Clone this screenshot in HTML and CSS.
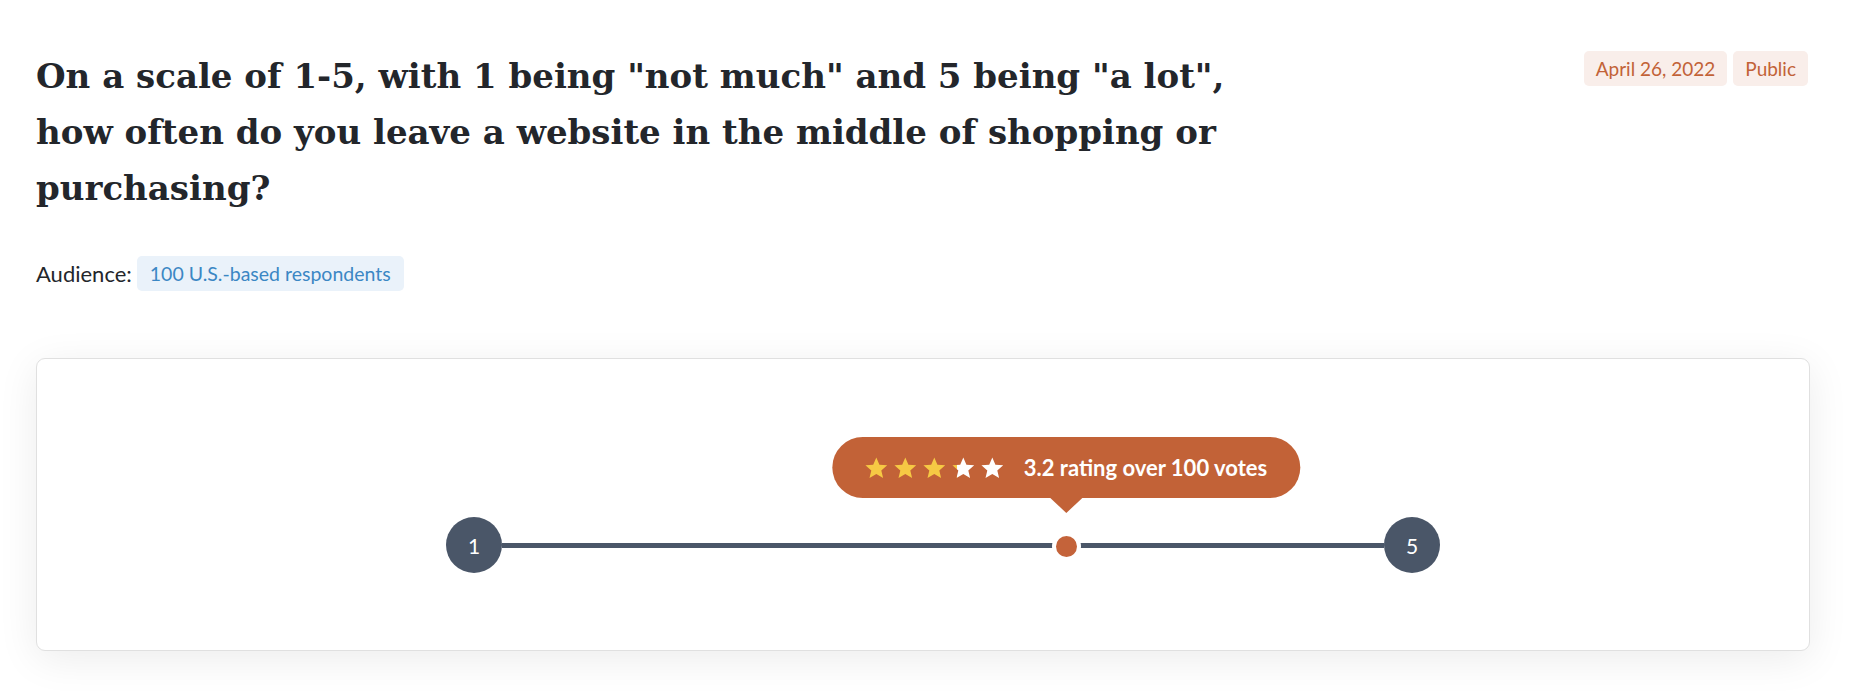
FILE: index.html
```html
<!DOCTYPE html>
<html lang="en">
<head>
<meta charset="utf-8">
<title>Poll result</title>
<link rel="stylesheet" href="styles.css">
</head>
<body>
<main class="page">
  <header class="head">
    <h1 class="title">On a scale of 1-5, with 1 being "not much" and 5 being "a lot", how often do you leave a website in the middle of shopping or purchasing?</h1>
    <div class="tags">
      <span class="tag">April 26, 2022</span>
      <span class="tag">Public</span>
    </div>
  </header>
  <div class="audience">
    <span class="aud-label">Audience:</span>
    <span class="aud-badge">100 U.S.-based respondents</span>
  </div>
  <section class="card">
    <div class="scale">
      <div class="end">1</div>
      <div class="track">
        <div class="marker" style="left: 64%;">
          <div class="tip">
            <span class="stars">
              <svg class="star" viewBox="0 0 24 24"><path class="full" d="M12 1.5l3.1 7.2 7.8.6-5.9 5.1 1.8 7.6L12 18l-6.8 4 1.8-7.6-5.9-5.1 7.8-.6z"/></svg>
              <svg class="star" viewBox="0 0 24 24"><path class="full" d="M12 1.5l3.1 7.2 7.8.6-5.9 5.1 1.8 7.6L12 18l-6.8 4 1.8-7.6-5.9-5.1 7.8-.6z"/></svg>
              <svg class="star" viewBox="0 0 24 24"><path class="full" d="M12 1.5l3.1 7.2 7.8.6-5.9 5.1 1.8 7.6L12 18l-6.8 4 1.8-7.6-5.9-5.1 7.8-.6z"/></svg>
              <svg class="star" viewBox="0 0 24 24"><defs><linearGradient id="part"><stop offset="20%" stop-color="#f6c944"/><stop offset="20%" stop-color="#ffffff"/></linearGradient></defs><path fill="url(#part)" d="M12 1.5l3.1 7.2 7.8.6-5.9 5.1 1.8 7.6L12 18l-6.8 4 1.8-7.6-5.9-5.1 7.8-.6z"/></svg>
              <svg class="star" viewBox="0 0 24 24"><path class="empty" d="M12 1.5l3.1 7.2 7.8.6-5.9 5.1 1.8 7.6L12 18l-6.8 4 1.8-7.6-5.9-5.1 7.8-.6z"/></svg>
            </span>
            <span class="tip-text">3.2 rating over 100 votes</span>
          </div>
          <div class="dot"></div>
        </div>
      </div>
      <div class="end">5</div>
    </div>
  </section>
</main>
</body>
</html>
```
FILE: styles.css
```css
* { box-sizing: border-box; }
html, body { margin: 0; padding: 0; background: #ffffff; }
body { font-family: "Lato", "Liberation Sans", sans-serif; color: #23262b; }

.page { padding: 48px 40px 40px 36px; }

.head {
  display: flex;
  justify-content: space-between;
  align-items: flex-start;
}
.title {
  margin: 0;
  max-width: 1245px;
  font-family: "DejaVu Serif", "Liberation Serif", serif;
  font-weight: 700;
  font-size: 34px;
  line-height: 56px;
  color: #23262b;
  letter-spacing: 0;
}
.tags { display: flex; gap: 6px; margin-top: 3px; margin-right: 2px; }
.tag {
  display: inline-flex;
  align-items: center;
  height: 35px;
  padding: 0 12px;
  border-radius: 5px;
  background: #f9eeea;
  color: #c26237;
  font-size: 19px;
  white-space: nowrap;
}

.audience {
  display: flex;
  align-items: center;
  gap: 5px;
  margin-top: 40px;
}
.aud-label { font-size: 22px; color: #23262b; }
.aud-badge {
  display: inline-flex;
  align-items: center;
  height: 35px;
  padding: 0 13px;
  border-radius: 5px;
  background: #eaf2fa;
  color: #3b87c4;
  font-size: 19.5px;
}

.card {
  margin-top: 67px;
  height: 293px;
  border: 1px solid #e0e0e0;
  border-radius: 9px;
  background: #fff;
  box-shadow: 0 8px 40px rgba(0, 0, 0, 0.08);
  padding-top: 158px;
}
.scale {
  display: flex;
  align-items: center;
  width: 994px;
  margin-left: 409px;
}
.end {
  flex: 0 0 56px;
  height: 56px;
  border-radius: 50%;
  background: #4a5668;
  color: #fff;
  display: flex;
  align-items: center;
  justify-content: center;
  font-size: 21px;
}
.track {
  flex: 1;
  height: 5px;
  background: #4a5668;
  position: relative;
}
.marker {
  position: absolute;
  top: 50%;
  width: 0;
  height: 0;
}
.dot {
  position: absolute;
  left: -14.5px;
  top: -13px;
  width: 29px;
  height: 29px;
  border-radius: 50%;
  background: #c4633a;
  border: 4px solid #fff;
}
.tip {
  position: absolute;
  bottom: 47px;
  left: 0;
  transform: translateX(-50%);
  height: 61px;
  padding: 0 33px 0 32px;
  border-radius: 31px;
  background: #c26237;
  display: flex;
  align-items: center;
  gap: 19px;
  white-space: nowrap;
}
.tip::after {
  content: "";
  position: absolute;
  left: 50%;
  top: 100%;
  margin-left: -16px;
  border-left: 16px solid transparent;
  border-right: 16px solid transparent;
  border-top: 15px solid #c26237;
}
.stars { display: flex; gap: 5px; }
.star { width: 24px; height: 24px; display: block; }
.star .full { fill: #f6c944; }
.star .empty { fill: #ffffff; }
.tip-text {
  color: #fff;
  font-weight: 700;
  font-size: 22px;
}
```
